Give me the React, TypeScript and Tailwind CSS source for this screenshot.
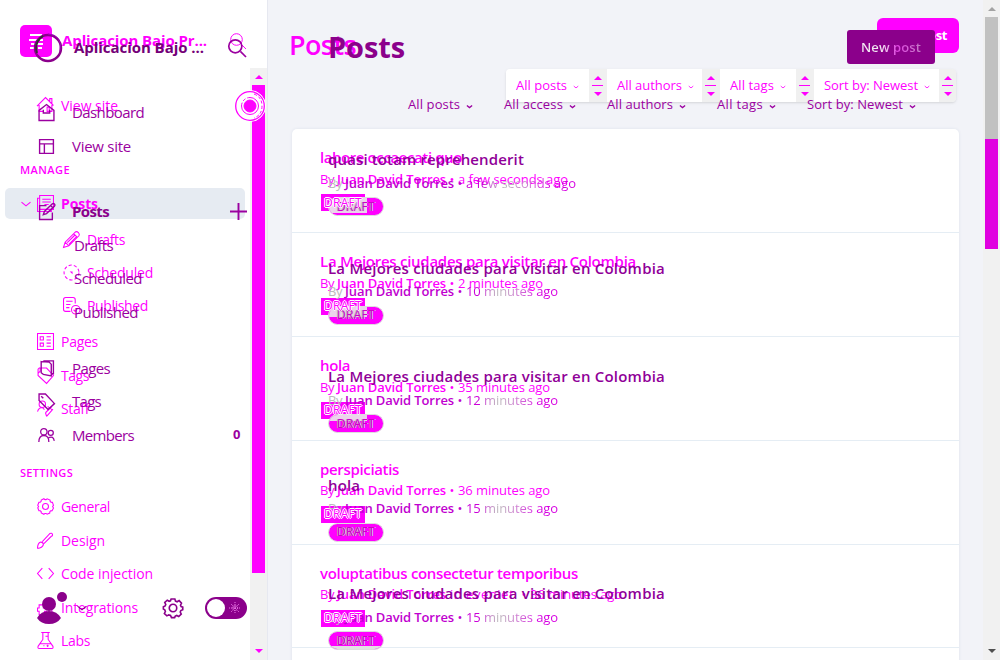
import { useLayoutEffect, useRef } from "react";
import type { ReactNode } from "react";

function Fit({ w, className = "", children }: { w: number; className?: string; children: ReactNode }) {
  const ref = useRef<HTMLSpanElement>(null);
  useLayoutEffect(() => {
    const el = ref.current;
    if (!el) return;
    el.style.letterSpacing = "0px";
    const n = (el.textContent || "").length;
    const natural = el.getBoundingClientRect().width;
    if (n > 0) el.style.letterSpacing = (w - natural) / n + "px";
  }, [w]);
  return <span ref={ref} className={"inline-block shrink-0 whitespace-pre " + className}>{children}</span>;
}

const paths: Record<string, ReactNode> = {
  home: <path d="M0 8.500 8 .5l7.500 7.500M2 7.500v6h4M9 13.500h5V7.500M9.500 13.500v-4h2v4M12 4V1.500h2V6" />,
  posts: <path d="M2.500.5h13v13h-13zM2.500 3H.5v12.500h13v-2M5 4h8M5 6.500h8M7 9h4" />,
  pencil: <path d="m.5 15.500 1.500-5L11.500 1q1.500-1 3 .5t.5 3L5.500 14zM10 2.500 13.500 6M2 10.500 5.500 14M4 11l7-7M5.500 12.500l7-7" />,
  clock: <><circle cx="8" cy="8" r="7" strokeDasharray="3 2" /><path d="M7.500 7.500h1v1z" /></>,
  published: <><path d="M7 13.500H2.500q-2 0-2-2v-9q0-2 2-2h7q2 0 2 2V6M3 4h6M3 7h4M3 10h3" /><circle cx="12" cy="12" r="4" /><path d="m10 12 1.500 1.500L14 10.500" /></>,
  grid: <path d="M.5.500h15v15H.5zM3 3.500h3v3H3zM3 9.500h3v3H3zM9 3.500h4M9 6.500h4M9 9.500h4M9 12.500h4" />,
  tagDown: <path d="M2.500.5 1 2v6l8 7.500L15.500 8 9 1H3v3L1 6" />,
  staff: <><circle cx="5" cy="4" r="3" /><path d="M.5 11q1-4 4.500-4l2 2M9 15.500l6-7M8 12l6-6M8 12l1 3.500M10 6l4 3" /></>,
  gear: <><circle cx="8" cy="8" r="2.800" /><path d="m6.500.7 1 .8h1l1-.8 2.800 1.200.1 1.300.8.800 1.300.1L15.500 7l-.8 1 .8 1.500-1.300 2.500-1.300.1-.8.8-.1 1.300-2.500 1.100-1-.8h-1l-1 .8L4 14l-.1-1.200-.8-.8-1.300-.1L.7 9.200l.8-1-.8-1.400L1.800 4l1.300-.1.8-.8L4 1.900z" /></>,
  cog: <><circle cx="8" cy="8" r="3" /><path d="M6.500.8h3L10 2.500l1.300.5 1.600-.9 1.900 2-.8 1.700.5 1.100 1.300.4v2l-1.500.7-.5 1.200.8 1.700-2 1.900-1.600-.8-1.200.5-.5 1.200h-2.500L6 14l-1.400-.5-1.500.8-2-1.900.8-1.600-.5-1.300L.3 8.900V7l1.400-.6.5-1.200-.8-1.700 2-1.700 1.500.8L6 2.200z" /></>,
  brush: <path d="M.5 15.500q0-5 3-6 2.500 0 2.500 2.500-1 3-5.500 3.500M5 9l7-7.500q2-1 2.500.5t-1 2L6.500 11" />,
  code: <path d="m5 3-4.500 5L5 13M11 3l4.500 5-4.500 5" />,
  blocks: <path d="M2 5.500h4v3h2v-3h6v9h-5v-3H7v3H2v-3H.5v-3H2z" />,
  flask: <path d="M4 .5h8M5.500.5V7L1 13.500q-.5 2 1 2h12q1.500 0 1-2L10.500 7V.5M3 11h10M6 13h1M10 12v2M9 13h2M8 4h2" />,
  house: <path d="M1 6 8 .5 15 6v9.500H1zM5 5.500v3h6v-3" />,
  layout: <path d="M1.500 1.500h13v13h-13zM1.500 5.500h13M6 5.500v9" />,
  edit: <path d="M8 2.500H1.500v13h12V9M5 11l1-3L13.500.8q1-.8 2 .2t0 2L8 10zM12 2.500l2 2" />,
  copy: <path d="M3 1.500 10.500 2l2 2v11L5 13.500 3 12zM5 .8h9.500V13h-2" />,
  tag: <path d="M1 1v6l8.500 8.500L15.500 10 7 1zM3 3l2 2" />,
  members: <><circle cx="5.500" cy="4.500" r="3" /><circle cx="12" cy="5.500" r="2.400" /><path d="M.8 14q0-6 4.700-6t4.700 6M10 10q4.500-2 5.300 3" /></>,
  search: <><circle cx="6.500" cy="6.500" r="5.800" /><path d="m11 11 5 5" /></>,
  plus: <path d="M8 0v16M0 8h16" />,
  chevron: <path d="m2 5.500 6 5 6-5" />,
};

function Icon({ name, size = 17, sw = 1, className = "" }: { name: string; size?: number; sw?: number; className?: string }) {
  return (
    <svg width={size} height={size} viewBox="0 0 16 16" fill="none" stroke="currentColor" strokeWidth={sw} className={"shrink-0 overflow-visible " + className}>
      {paths[name]}
    </svg>
  );
}

function Row({ icon, label, w, mt, sub, bold, back }: { icon?: string; label: string; w: number; mt: string; sub?: boolean; bold?: boolean; back?: boolean }) {
  const pad = back ? (sub ? "pl-[63px] gap-[7px]" : "pl-[37px] gap-[7px]") : sub ? "pl-[74px]" : "pl-[38px] gap-[17px]";
  return (
    <div className={"flex h-5 items-center " + pad + " " + mt}>
      {icon && <Icon name={icon} sw={back ? 1 : 1.3} />}
      <Fit w={w} className={(back ? "text-[14px] " : "text-[15px] ") + (bold ? "font-bold" : "")}>{label}</Fit>
    </div>
  );
}

function BackSidebar() {
  return (
    <aside className="flex h-[660px] w-[268px] shrink-0 flex-col overflow-hidden border-r border-[#e6e8f0] bg-white text-[#ff00ff]">
      <header className="flex h-[68px] shrink-0 items-start pl-5 pt-[25px]">
        <svg width="32" height="32" viewBox="0 0 32 32" className="shrink-0"><rect width="32" height="32" rx="5" fill="#f0f" /><path d="M10 10h12M9 15h8M20 15h3M11 19h12M10 23h5M18 23h4" stroke="#fff" strokeWidth="1.800" /></svg>
        <Fit w={145} className="ml-[10px] mt-[4px] text-[15px] font-bold leading-[22px]">Aplicacion Bajo Pr...</Fit>
        <Icon name="search" size={16} className="ml-[23px] mt-[8px]" />
      </header>
      <div className="flex h-[592px]">
        <nav className="w-[250px] overflow-hidden">
          <Row back icon="home" label="View site" w={57} mt="mt-[27px]" />
          <h2 className="mt-[45px] h-5 pl-5 text-[11px] leading-5"><Fit w={50} className="font-semibold">MANAGE</Fit></h2>
          <div className="ml-[5px] mt-[8px] flex h-[31px] w-[240px] items-center rounded-[5px] bg-[#e6ebf2] pl-[15px]">
            <Icon name="chevron" size={12} sw={1.5} /><Icon name="posts" className="ml-[5px]" /><Fit w={37} className="ml-[7px] text-[14px] font-bold">Posts</Fit>
          </div>
          <Row back sub icon="pencil" label="Drafts" w={38} mt="mt-[10px]" />
          <Row back sub icon="clock" label="Scheduled" w={66} mt="mt-[13px]" />
          <Row back sub icon="published" label="Published" w={61} mt="mt-[13px]" />
          <Row back icon="grid" label="Pages" w={37} mt="mt-[16px]" />
          <Row back icon="tagDown" label="Tags" w={28} mt="mt-[14px]" />
          <Row back icon="staff" label="Staff" w={28} mt="mt-[13px]" />
          <h2 className="mt-[45px] h-5 pl-5 text-[11px] leading-5"><Fit w={53} className="font-semibold">SETTINGS</Fit></h2>
          <Row back icon="gear" label="General" w={49} mt="mt-[13px]" />
          <Row back icon="brush" label="Design" w={44} mt="mt-[14px]" />
          <Row back icon="code" label="Code injection" w={92} mt="mt-[13px]" />
          <Row back icon="blocks" label="Integrations" w={77} mt="mt-[14px]" />
          <Row back icon="flask" label="Labs" w={29} mt="mt-[13px]" />
        </nav>
        <div className="flex w-[17px] flex-col items-center bg-[#f1f1f1]">
          <svg width="17" height="17"><path d="m5 11 4-4 4 4z" fill="#f0f" /></svg>
          <div className="h-[488px] w-[13px] bg-[#ff00ff]" />
          <svg width="17" height="17" className="mt-[70px]"><path d="m5 6 4 4 4-4z" fill="#f0f" /></svg>
        </div>
      </div>
    </aside>
  );
}

function FrontSidebar() {
  return (
    <aside className="flex h-[660px] w-[268px] shrink-0 flex-col overflow-hidden text-[#9b00a0]">
      <header className="flex h-[102px] shrink-0 items-start pl-[33px] pt-[33px]">
        <svg width="30" height="30" viewBox="0 0 30 30" fill="none" className="shrink-0"><circle cx="15" cy="15" r="13" stroke="#8b008b" strokeWidth="2.500" /><path d="M4 20Q1 9 10 3" stroke="#333" strokeWidth="2" /><path d="M15 1q15 1 12 17" stroke="#a000c0" /></svg>
        <Fit w={130} className="ml-[11px] mt-[3px] text-[15px] font-bold leading-[22px] text-[#740078]">Aplicacion Bajo ...</Fit>
        <Icon name="search" size={18} sw={1.5} className="ml-[24px] mt-[6px]" />
      </header>
      <Row icon="house" label="Dashboard" w={72} mt="" />
      <Row icon="layout" label="View site" w={59} mt="mt-[14px]" />
      <div className="mt-[45px] flex h-5 items-center pl-[38px]">
        <Icon name="edit" sw={1.3} /><Fit w={37} className="ml-[17px] text-[15px] font-bold text-[#8b008b]">Posts</Fit><Icon name="plus" sw={1.8} className="ml-[121px]" />
      </div>
      <Row sub label="Drafts" w={39} mt="mt-[14px]" />
      <Row sub label="Scheduled" w={68} mt="mt-[13px]" />
      <Row sub label="Published" w={64} mt="mt-[14px]" />
      <Row icon="copy" label="Pages" w={38} mt="mt-[36px]" />
      <Row icon="tag" label="Tags" w={29} mt="mt-[13px]" />
      <div className="mt-[14px] flex h-5 items-center pl-[38px]">
        <Icon name="members" sw={1.2} /><Fit w={62} className="ml-[17px] text-[15px]">Members</Fit><span className="ml-[99px] text-[13px] font-bold">0</span>
      </div>
      <footer className="mt-[146px] flex h-[34px] items-center pl-[36px] text-[#8b008b]">
        <svg width="32" height="34" viewBox="0 0 32 34" fill="currentColor"><circle cx="13" cy="13" r="7" /><path d="M1 27q4-7 12-7t12 7q-4 6-12 6T1 27" /><circle cx="26" cy="6" r="5" /></svg>
        <Icon name="chevron" size={12} sw={1.5} className="ml-[8px]" />
        <Icon name="cog" size={20} sw={1.3} className="ml-[75px]" />
        <div className="ml-[22px] flex h-[22px] w-[42px] items-center rounded-full bg-[#8b008b] pl-[2px]">
          <div className="size-[18px] rounded-full bg-white" />
          <svg width="12" height="12" viewBox="0 0 12 12" fill="none" stroke="#eb7be9" strokeDasharray="1 1" className="ml-1"><circle cx="6" cy="6" r="2.500" /><path d="M6 0v12M0 6h12M2 2l8 8M10 2l-8 8" /></svg>
        </div>
      </footer>
    </aside>
  );
}

function Filter({ label, w, box }: { label: string; w: number; box: string }) {
  return (
    <div className="flex h-full shrink-0">
      <div className={"flex items-center bg-white pl-[10px] " + box}><Fit w={w} className="text-[13px]">{label}</Fit><Icon name="chevron" size={6} sw={2.2} className="ml-[6px] mt-[2px]" /></div>
      <svg width="18" height="33" className="-ml-px shrink-0 bg-[#f0f0f0]" fill="#f0f"><path d="m5 11 4-4 4 4zM3 16h11v1H3zM5 23l4 4 4-4z" /></svg>
    </div>
  );
}

function PlainFilter({ label, w, ml }: { label: string; w: number; ml: string }) {
  return <div className={"flex items-center " + ml}><Fit w={w} className="text-[13px]">{label}</Fit><Icon name="chevron" size={7} sw={3} className="ml-[6px] mr-px mt-[2px]" /></div>;
}

const backPosts = [
  { title: "labore occaecati quo", w: 142, ago: "a few seconds ago", aw: 110 },
  { title: "La Mejores ciudades para visitar en Colombia", w: 316, ago: "2 minutes ago", aw: 85 },
  { title: "hola", w: 30, ago: "35 minutes ago", aw: 92 },
  { title: "perspiciatis", w: 79, ago: "36 minutes ago", aw: 92 },
  { title: "voluptatibus consectetur temporibus", w: 258, ago: "36 minutes ago", aw: 92, tag: "eveniet" },
];
const frontPosts = [
  { title: "quasi totam reprehenderit", w: 196, ago: "a few seconds ago", aw: 110 },
  { title: "La Mejores ciudades para visitar en Colombia", w: 337, ago: "10 minutes ago", aw: 92 },
  { title: "La Mejores ciudades para visitar en Colombia", w: 337, ago: "12 minutes ago", aw: 92 },
  { title: "hola", w: 32, ago: "15 minutes ago", aw: 92 },
  { title: "La Mejores ciudades para visitar en Colombia", w: 337, ago: "15 minutes ago", aw: 92 },
];

function BackMain() {
  return (
    <main className="h-[660px] w-[715px] shrink-0 overflow-hidden bg-[#f2f3f8] pl-[22px] text-[#ff00ff]">
      <header className="flex h-[69px] justify-between pr-[24px] pt-[18px]">
        <Fit w={67} className="-ml-px h-[54px] text-[27px] font-semibold leading-[54px]">Posts</Fit>
        <div className="flex h-[35px] w-[82px] items-center justify-end rounded-md bg-[#ff00ff] pr-[12px]"><Fit w={58} className="text-[13px] font-bold text-white">New post</Fit></div>
      </header>
      <div className="ml-[216px] flex h-[33px] w-[450px] overflow-hidden rounded-[4px] shadow-sm">
        <Filter label="All posts" w={51} box="w-[84px]" /><Filter label="All authors" w={65} box="w-[96px]" /><Filter label="All tags" w={44} box="w-[77px]" /><Filter label="Sort by: Newest" w={94} box="w-[126px]" />
      </div>
      <section className="ml-[2px] mt-[27px] h-[540px] w-[667px] rounded-t-[5px] bg-white shadow-[0_0_3px_#dce1ea]">
        {backPosts.map((p, i) => (
          <article key={i} className="h-[103.900px] border-b border-[#e5edf4] pl-7 pt-[18px]">
            <h3 className="-mt-px h-[22px] text-[15px] font-semibold leading-[22px]"><Fit w={p.w}>{p.title}</Fit></h3>
            <p className="mt-px flex h-[21px] items-center text-[13px]">
              <Fit w={17}>By </Fit><Fit w={109} className="font-semibold">Juan David Torres</Fit>
              {p.tag && <Fit w={72}>{" in " + p.tag + " "}</Fit>}
              <Fit w={12}> • </Fit><Fit w={p.aw}>{p.ago}</Fit>
            </p>
            <div className="ml-px mt-[4px] flex h-[17px] w-11 items-center justify-center bg-[#ff00ff]"><Fit w={38} className="relative z-10 text-[12px] text-[#ff00ff] [text-shadow:1px_0_white,-1px_0_white,0_1px_white,0_-1px_white]">DRAFT</Fit></div>
          </article>
        ))}
      </section>
    </main>
  );
}

function FrontMain() {
  return (
    <main className="h-[660px] w-[715px] shrink-0 overflow-hidden text-[#9b00a0]">
      <header className="flex h-[95px] items-start justify-between pl-[60px] pr-[48px] pt-[30px]">
        <Fit w={77} className="-mt-px text-[29px] font-bold leading-[36px] text-[#8b008b]">Posts</Fit>
        <div className="flex h-[34px] w-[88px] items-center justify-center rounded-[3px] bg-[#8b008b]"><Fit w={60} className="mt-px bg-gradient-to-r from-[#f2e8f2] from-35% via-[#e040e3] via-60% to-[#c37cc5] bg-clip-text text-[13px] font-semibold text-transparent">New post</Fit></div>
      </header>
      <div className="flex h-5 items-center pl-[140px]">
        <PlainFilter label="All posts" w={52} ml="ml-0" /><PlainFilter label="All access" w={59} ml="ml-[30px]" /><PlainFilter label="All authors" w={66} ml="ml-[30px]" /><PlainFilter label="All tags" w={46} ml="ml-[30px]" /><PlainFilter label="Sort by: Newest" w={96} ml="ml-[30px]" />
      </div>
      <section className="pl-[60px] pt-[16px]">
        {frontPosts.map((p, i) => (
          <article key={i} className="h-[108.500px] pt-[17px]">
            <h3 className="h-[22px] text-[15px] font-semibold leading-[22px] text-[#900098]"><Fit w={p.w}>{p.title}</Fit></h3>
            <p className="mt-[3.500px] flex h-[20px] items-center text-[13px] text-[#c000cf]">
              <Fit w={17} className="text-[#bbb]">By </Fit><Fit w={109} className="font-semibold">Juan David Torres</Fit><Fit w={12}> • </Fit>
              <Fit w={p.aw} className="bg-gradient-to-r from-[#ca00d8] from-15% via-[#bdbdbd] via-35% to-[#d600e1] to-75% bg-clip-text text-transparent">{p.ago}</Fit>
            </p>
            <div className="mt-[3.500px] flex h-[19px] w-[56px] items-center justify-center overflow-hidden rounded-full border border-[#dedede] bg-[#ff00ff]">
              <div className="relative flex h-full w-full items-center justify-center">
                {i < 3 && <div className={"absolute left-0 top-0 w-[38px] bg-[#ecd2ec] " + (i === 0 ? "h-[15px]" : i === 1 ? "h-[10px]" : "h-[6px]")} />}
                <Fit w={38} className="relative text-[12px] text-[#d000c8] [text-shadow:1px_0_#d6d6d6,-1px_0_#aaa]">DRAFT</Fit>
                {i === 4 && <div className="absolute bottom-0 left-0 h-[3px] w-full bg-[#e2e2e2]" />}
              </div>
            </div>
          </article>
        ))}
      </section>
    </main>
  );
}

export default function App() {
  return (
    <div className="relative h-[660px] w-[1000px] overflow-hidden font-['Open_Sans','Noto_Sans',sans-serif]">
      <div className="flex">
        <BackSidebar />
        <BackMain />
        <div className="flex h-[660px] w-[17px] flex-col items-center bg-[#f1f1f1]">
          <svg width="17" height="17"><path d="m5 11 4-4 4 4z" fill="#a3a3a3" /></svg>
          <div className="h-[122px] w-[13px] bg-[#c1c1c1]" />
          <div className="h-[110px] w-[13px] bg-[#e000e0]" />
          <svg width="17" height="17" className="mt-[394px]"><path d="m5 6 4 4 4-4z" fill="#505050" /></svg>
        </div>
      </div>
      <div className="absolute inset-0 flex">
        <FrontSidebar />
        <FrontMain />
      </div>
      <svg width="32" height="32" viewBox="0 0 32 32" fill="none" stroke="#f0f" className="absolute left-[234px] top-[90px]"><circle cx="16" cy="16" r="15.500" fill="#fff" stroke="#fff" /><circle cx="16" cy="16" r="14.300" strokeWidth="1.300" /><circle cx="16" cy="16" r="8.500" strokeDasharray="30 2 3 2" /><circle cx="16" cy="16" r="6" fill="#f0f" /><path d="M20 4q8 3 8 12t-8 12" strokeDasharray="3 2" /></svg>
    </div>
  );
}
